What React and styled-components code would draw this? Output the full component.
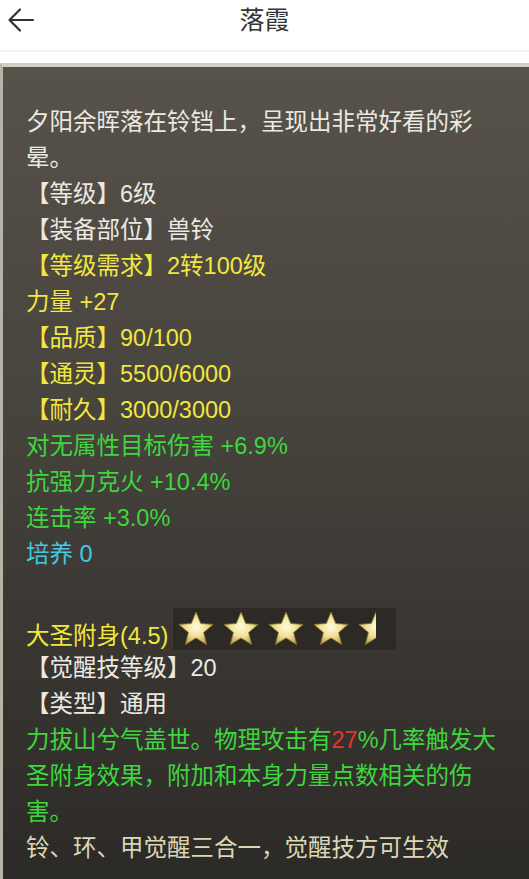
import React from "react";
import styled, { createGlobalStyle } from "styled-components";

const GlobalStyle = createGlobalStyle`
  html, body {
    margin: 0;
    padding: 0;
    background: #ffffff;
  }
  body {
    font-family: "Liberation Sans", "Noto Sans CJK SC", sans-serif;
  }
`;

const colors = {
  white: "#ebe9e2",
  yellow: "#f1e73f",
  green: "#3fd63d",
  cyan: "#45c9e2",
  red: "#ec3131",
  beige: "#dcd7b6",
};

const Page = styled.div`
  width: 529px;
  height: 879px;
  overflow: hidden;
  display: flex;
  flex-direction: column;
  background: #ffffff;
`;

const Header = styled.div`
  height: 50px;
  display: flex;
  align-items: center;
  justify-content: center;
  position: relative;
  border-bottom: 2px solid #f3f3f3;
  flex-shrink: 0;
`;

const Back = styled.div`
  position: absolute;
  left: 7px;
  top: 6px;
  width: 28px;
  height: 28px;
  display: flex;
`;

const Title = styled.h1`
  margin: 0 0 14px;
  font-family: "Noto Sans CJK SC", sans-serif;
  font-size: 25px;
  font-weight: 400;
  color: #333333;
`;

const Gap = styled.div`
  height: 11px;
  flex-shrink: 0;
`;

const Panel = styled.div`
  flex: 1;
  border-top: 4px solid #d2d0c3;
  border-left: 3px solid #b6b4a7;
  background: linear-gradient(180deg, #57524a 0%, #48443e 40%, #2c2a27 100%);
  padding: 37px 22px 0 23px;
`;

const Line = styled.div`
  font-size: 23.5px;
  line-height: 36px;
  color: ${(p) => colors[p.$c] || colors.white};
`;

const Red = styled.span`
  color: ${colors.red};
`;

const Blank = styled.div`
  height: 36px;
`;

const StarRow = styled.div`
  display: flex;
  align-items: flex-start;
  height: 42px;
  gap: 5px;
`;

const StarBox = styled.div`
  display: flex;
  background: #2d2a25;
  padding: 1px 4px;
`;

const StarText = styled(Line)`
  margin-top: 10px;
`;

const Arrow = () => (
  <svg width="28" height="28" viewBox="0 0 28 28">
    <path
      d="M26 14 H3 M13 3.5 L2.5 14 L13 24.5"
      fill="none"
      stroke="#333"
      strokeWidth="2.2"
      strokeLinecap="round"
      strokeLinejoin="round"
    />
  </svg>
);

const starPath = (cx, cy, R, r) => {
  let d = "";
  for (let i = 0; i < 10; i++) {
    const rad = i % 2 === 0 ? R : r;
    const a = (Math.PI / 5) * i - Math.PI / 2;
    d += (i === 0 ? "M" : "L") + (cx + rad * Math.cos(a)).toFixed(2) + " " + (cy + rad * Math.sin(a)).toFixed(2);
  }
  return d + "Z";
};

const Stars = ({ value }) => {
  const full = Math.floor(value);
  const half = value - full >= 0.5;
  const pitch = 45;
  return (
    <svg width="215" height="40" viewBox="0 0 215 40">
      <defs>
        <radialGradient id="sg" cx="50%" cy="45%" r="60%">
          <stop offset="0%" stopColor="#fffbd8" />
          <stop offset="50%" stopColor="#f1e29a" />
          <stop offset="100%" stopColor="#b69a3c" />
        </radialGradient>
        <clipPath id="halfclip">
          <rect x={full * pitch} y="0" width="19" height="40" />
        </clipPath>
      </defs>
      {Array.from({ length: full }).map((_, i) => (
        <path key={i} d={starPath(19 + i * pitch, 21, 18, 8)} fill="url(#sg)" stroke="#8a7530" strokeWidth="0.8" />
      ))}
      {half && (
        <path d={starPath(19 + full * pitch, 21, 18, 8)} fill="url(#sg)" stroke="#8a7530" strokeWidth="0.8" clipPath="url(#halfclip)" />
      )}
    </svg>
  );
};

const App = () => {
  return (
    <Page>
      <GlobalStyle />
      <Header>
        <Back>
          <Arrow />
        </Back>
        <Title>落霞</Title>
      </Header>
      <Gap />
      <Panel>
        <Line $c="white">夕阳余晖落在铃铛上，呈现出非常好看的彩晕。</Line>
        <Line $c="white">【等级】6级</Line>
        <Line $c="white">【装备部位】兽铃</Line>
        <Line $c="yellow">【等级需求】2转100级</Line>
        <Line $c="yellow">力量 +27</Line>
        <Line $c="yellow">【品质】90/100</Line>
        <Line $c="yellow">【通灵】5500/6000</Line>
        <Line $c="yellow">【耐久】3000/3000</Line>
        <Line $c="green">对无属性目标伤害 +6.9%</Line>
        <Line $c="green">抗强力克火 +10.4%</Line>
        <Line $c="green">连击率 +3.0%</Line>
        <Line $c="cyan">培养 0</Line>
        <Blank />
        <StarRow>
          <StarText $c="yellow">大圣附身(4.5)</StarText>
          <StarBox>
            <Stars value={4.5} />
          </StarBox>
        </StarRow>
        <Line $c="white">【觉醒技等级】20</Line>
        <Line $c="white">【类型】通用</Line>
        <Line $c="green">
          力拔山兮气盖世。物理攻击有<Red>27</Red>%几率触发大圣附身效果，附加和本身力量点数相关的伤害。
        </Line>
        <Line $c="beige">铃、环、甲觉醒三合一，觉醒技方可生效</Line>
      </Panel>
    </Page>
  );
};

export default App;
